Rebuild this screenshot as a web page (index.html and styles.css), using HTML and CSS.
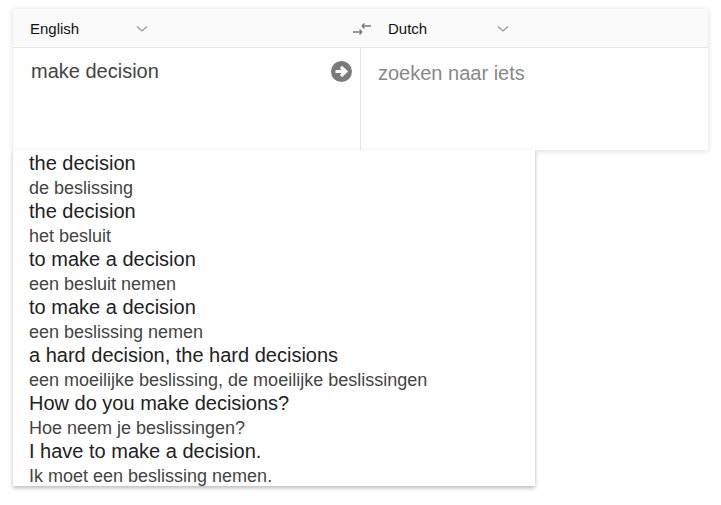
FILE: index.html
```html
<!DOCTYPE html>
<html>
<head>
<meta charset="utf-8">
<link rel="stylesheet" href="styles.css">
</head>
<body>
<div class="card">
  <div class="header">
    <div class="lang lang-src">
      <span class="lang-name">English</span>
      <svg class="chev" width="12" height="8" viewBox="0 0 12 8"><path d="M1 1.5 L6 6 L11 1.5" fill="none" stroke="#999" stroke-width="1.3"/></svg>
    </div>
    <div class="swap">
      <svg width="20" height="14" viewBox="0 0 20 14"><path d="M10 4 H19 M10 4 L12.5 1.5 M10 4 L12.5 6.5" fill="none" stroke="#777" stroke-width="1.4"/><path d="M1 10 H10 M10 10 L7.5 7.5 M10 10 L7.5 12.5" fill="none" stroke="#777" stroke-width="1.4"/></svg>
    </div>
    <div class="lang lang-dst">
      <span class="lang-name">Dutch</span>
      <svg class="chev" width="12" height="8" viewBox="0 0 12 8"><path d="M1 1.5 L6 6 L11 1.5" fill="none" stroke="#999" stroke-width="1.3"/></svg>
    </div>
  </div>
  <div class="body">
    <div class="pane pane-src">
      <span class="input">make decision</span>
      <svg class="go" width="21" height="21" viewBox="0 0 21 21"><circle cx="10.5" cy="10.5" r="10.5" fill="#7a7a7a"/><path d="M4.5 10.5 H14 M10 6 L14.8 10.5 L10 15" fill="none" stroke="#fff" stroke-width="3.2" stroke-linejoin="miter"/></svg>
    </div>
    <div class="pane pane-dst">
      <span class="output">zoeken naar iets</span>
    </div>
  </div>
</div>
<ul class="suggest">
  <li><div class="en">the decision</div><div class="nl">de beslissing</div></li>
  <li><div class="en">the decision</div><div class="nl">het besluit</div></li>
  <li><div class="en">to make a decision</div><div class="nl">een besluit nemen</div></li>
  <li><div class="en">to make a decision</div><div class="nl">een beslissing nemen</div></li>
  <li><div class="en">a hard decision, the hard decisions</div><div class="nl">een moeilijke beslissing, de moeilijke beslissingen</div></li>
  <li><div class="en">How do you make decisions?</div><div class="nl">Hoe neem je beslissingen?</div></li>
  <li><div class="en">I have to make a decision.</div><div class="nl">Ik moet een beslissing nemen.</div></li>
</ul>
</body>
</html>
```
FILE: styles.css
```css
html, body {
  margin: 0;
  padding: 0;
  background: #ffffff;
  font-family: "Liberation Sans", Arial, sans-serif;
}
body {
  padding: 9px 13px 19px 13px;
  width: 695px;
}
.card {
  width: 695px;
  background: #fff;
  box-shadow: 0 1px 6px rgba(0,0,0,0.14);
}
.header {
  display: flex;
  align-items: center;
  height: 38px;
  background: #fafafa;
  border-bottom: 1px solid #e8e8e8;
}
.lang {
  display: flex;
  align-items: center;
  font-size: 15px;
  color: #111;
}
.lang-src {
  padding-left: 17px;
  width: 322px;
}
.lang-src .chev { margin-left: 57px; }
.lang-dst .chev { margin-left: 70px; }
.chev { display: block; margin-top: 1px; }
.swap {
  width: 36px;
  display: flex;
  align-items: center;
  justify-content: flex-start;
}
.swap svg { display: block; margin-top: 2px; }
.body {
  display: flex;
  height: 102px;
}
.pane {
  box-sizing: border-box;
  padding: 11px 0 0 0;
}
.pane-src {
  width: 348px;
  border-right: 1px solid #e6e6e6;
  display: flex;
  justify-content: space-between;
  align-items: flex-start;
  padding-left: 18px;
  padding-right: 8px;
}
.input {
  font-size: 20px;
  color: #444;
  line-height: 24px;
}
.go { display: block; margin-top: 2px; }
.pane-dst {
  flex: 1;
  padding-left: 17px;
  padding-top: 13px;
}
.output {
  font-size: 20px;
  color: #888;
  line-height: 24px;
}
.suggest {
  list-style: none;
  margin: 0;
  padding: 0 0 0 16px;
  width: 506px;
  background: #fff;
  box-shadow: 0 2px 4px rgba(0,0,0,0.28);
  position: relative;
}
.suggest li { margin: 0; padding: 0; }
.en {
  font-size: 20px;
  line-height: 24px;
  color: #222;
  padding-top: 1px;
  height: 23px;
}
.nl {
  font-size: 18px;
  line-height: 24px;
  color: #444;
  padding-top: 2px;
  height: 22px;
}
```
